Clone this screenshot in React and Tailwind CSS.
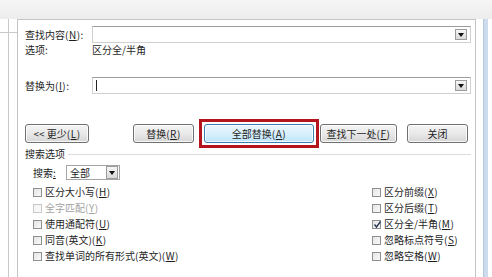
import React from "react";

const Mn = ({ k }) => (
  <span className="tracking-[0.5px]">
    (<span className="underline underline-offset-1">{k}</span>)
  </span>
);

const DropBtn = ({ cls = "" }) => (
  <div
    className={
      "flex items-center justify-center w-[12px] h-[11px] border border-[#9c9c9c] bg-gradient-to-b from-[#f6f6f6] to-[#d9d9d9] " +
      cls
    }
  >
    <svg width="6" height="4" viewBox="0 0 6 4">
      <polygon points="0,0 6,0 3,4" fill="#111" />
    </svg>
  </div>
);

const Btn = ({ children, w, blue = false, cls = "" }) => (
  <div
    className={
      "flex items-center justify-center h-[19px] rounded-[3px] border text-[10px] leading-none shadow-[inset_0_0_0_1px_rgba(255,255,255,0.8)] " +
      (blue
        ? "border-[#3c7fb1] bg-gradient-to-b from-[#eaf6fd] via-[#d9effc] to-[#bee6fd] "
        : "border-[#707070] bg-gradient-to-b from-[#f4f4f4] via-[#e9e9e9] to-[#d6d6d6] ") +
      cls
    }
    style={{ width: w }}
  >
    {children}
  </div>
);

const Check = ({ checked = false, disabled = false, children }) => (
  <div className="flex items-center h-[16px]">
    <div
      className={
        "relative w-[9px] h-[9px] border bg-gradient-to-br from-[#e4e4e4] to-[#fafafa] " +
        (disabled ? "border-[#c8c8c8] from-[#f3f3f3]" : "border-[#8e8f8f]")
      }
    >
      {checked && (
        <svg
          className="absolute left-[0px] top-[-1px]"
          width="9"
          height="9"
          viewBox="0 0 9 9"
        >
          <polyline
            points="1.5,4.5 3.5,7 7.5,1.5"
            fill="none"
            stroke="#2a3b5a"
            strokeWidth="1.4"
          />
        </svg>
      )}
    </div>
    <span
      className={
        "ml-[3px] text-[10px] leading-none " +
        (disabled ? "text-[#a3a3a3]" : "text-[#1e1e1e]")
      }
    >
      {children}
    </span>
  </div>
);

export default function App() {
  return (
    <div className="w-[492px] h-[277px] overflow-hidden bg-white flex font-['Noto_Sans_CJK_SC',sans-serif] text-[#1e1e1e]">
      {/* left gutter */}
      <div className="w-[17px] h-full flex flex-col">
        <div className="h-[19px] bg-gradient-to-b from-[#f6f6f6] to-[#ececec]" />
        <div className="flex-1 flex flex-col">
          <div className="h-[13px] w-[9px] border-r border-[#c9c9c9]" />
          <div className="h-px w-full bg-[#c9c9c9]" />
          <div className="flex-1 w-[9px] border-r border-[#c9c9c9]" />
        </div>
      </div>

      {/* main */}
      <div className="w-[459px] h-full flex flex-col">
        <div className="h-[19px] bg-gradient-to-b from-[#f6f6f6] to-[#ececec]" />
        <div className="flex-1 flex flex-col border-l border-r border-t border-[#c4c4c4] pl-[7px] pr-[4px] pt-[6px] text-[10px] leading-none">
          {/* find row */}
          <div className="flex items-center h-[17px]">
            <div className="w-[67px]">
              查找内容<Mn k="N" />:
            </div>
            <div className="flex-1 h-[17px] border border-[#d0d0d0] border-t-[#9c9c9c] bg-white flex items-center justify-end pr-[3px]">
              <DropBtn />
            </div>
          </div>
          {/* options */}
          <div className="flex items-center h-[13px]">
            <div className="w-[67px]">选项:</div>
            <div>区分全/半角</div>
          </div>
          {/* replace row */}
          <div className="flex items-center h-[17px] mt-[21px]">
            <div className="w-[67px]">
              替换为<Mn k="I" />:
            </div>
            <div className="flex-1 h-[17px] border border-[#d0d0d0] border-t-[#9c9c9c] bg-white flex items-center pr-[3px]">
              <div className="ml-[3px] w-px h-[11px] bg-[#222]" />
              <div className="flex-1" />
              <DropBtn />
            </div>
          </div>
          {/* buttons */}
          <div className="flex items-center h-[29px] mt-[25px]">
            <Btn w={64}>
              &lt;&lt; 更少<Mn k="L" />
            </Btn>
            <Btn w={61} cls="ml-[44px]">
              替换<Mn k="R" />
            </Btn>
            <div className="ml-[5px] border-[3px] border-[#b4141c] p-[2px]">
              <Btn w={110} blue>
                全部替换<Mn k="A" />
              </Btn>
            </div>
            <Btn w={77} cls="ml-[1px]">
              查找下一处<Mn k="F" />
            </Btn>
            <Btn w={61} cls="ml-[10px]">
              关闭
            </Btn>
          </div>
          {/* search options separator */}
          <div className="flex items-center h-[12px]">
            <span>搜索选项</span>
            <div className="flex-1 ml-[3px] h-px bg-[#dcdcdc]" />
          </div>
          {/* search select */}
          <div className="flex items-center h-[15px] mt-[5px] ml-[8px]">
            <div className="w-[33px]">
              搜索<span className="underline underline-offset-1">:</span>
            </div>
            <div className="w-[54px] h-[15px] border border-[#a5a5a5] bg-white flex items-center pl-[3px] pr-px">
              <span className="flex-1">全部</span>
              <DropBtn cls="h-[13px]" />
            </div>
          </div>
          {/* checkboxes */}
          <div className="flex mt-[4px] ml-[8px]">
            <div className="w-[339px] flex flex-col">
              <Check>
                区分大小写<Mn k="H" />
              </Check>
              <Check disabled>
                全字匹配<Mn k="Y" />
              </Check>
              <Check>
                使用通配符<Mn k="U" />
              </Check>
              <Check>
                同音(英文)<Mn k="K" />
              </Check>
              <Check>
                查找单词的所有形式(英文)<Mn k="W" />
              </Check>
            </div>
            <div className="flex flex-col">
              <Check>
                区分前缀<Mn k="X" />
              </Check>
              <Check>
                区分后缀<Mn k="T" />
              </Check>
              <Check checked>
                区分全/半角<Mn k="M" />
              </Check>
              <Check>
                忽略标点符号<Mn k="S" />
              </Check>
              <Check>
                忽略空格<Mn k="W" />
              </Check>
            </div>
          </div>
        </div>
      </div>

      {/* right gutter */}
      <div className="flex-1 h-full flex flex-col">
        <div className="h-[19px] bg-gradient-to-b from-[#f6f6f6] to-[#ececec]" />
        <div className="flex-1 flex">
          <div className="w-[7px]" />
          <div className="w-[5px] bg-[#cddcec] border-l border-[#b7c9dc]" />
        </div>
      </div>
    </div>
  );
}
